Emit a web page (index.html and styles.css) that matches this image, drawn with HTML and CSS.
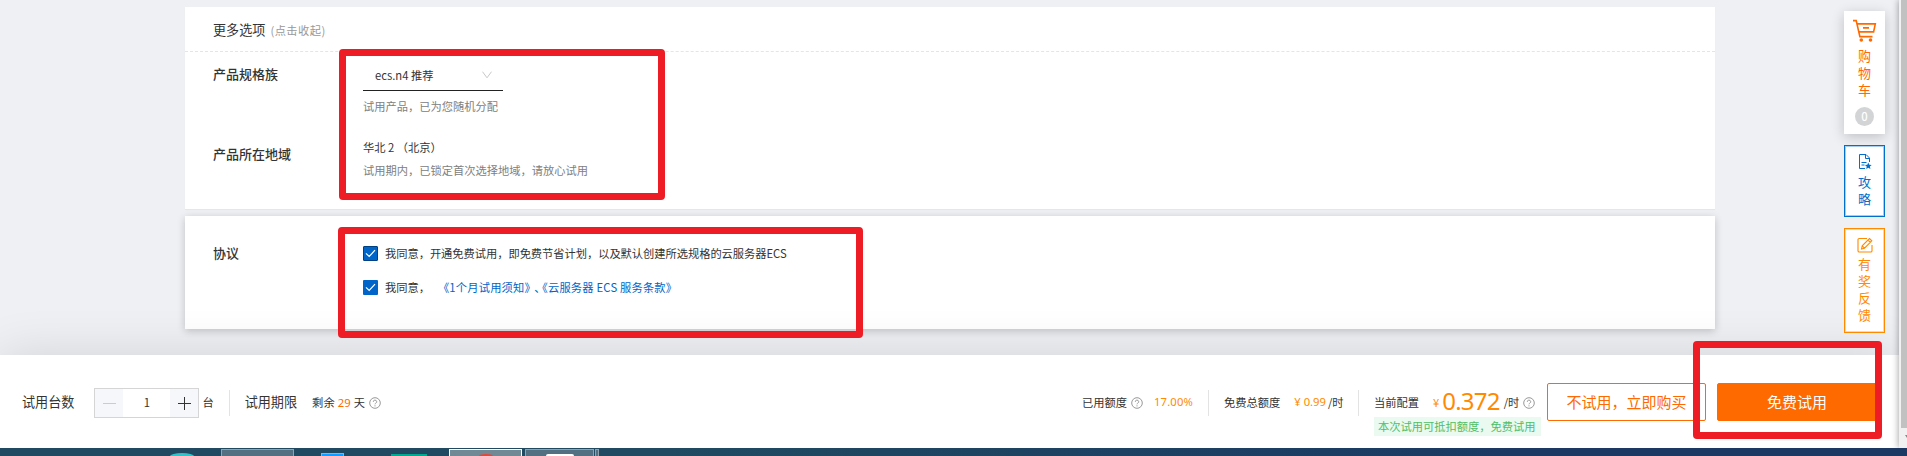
FILE: index.html
```html
<!DOCTYPE html>
<html lang="zh-CN">
<head>
<meta charset="utf-8">
<title>免费试用</title>
<link rel="stylesheet" href="styles.css">
</head>
<body>
<svg class="defs" width="0" height="0">
  <symbol id="help" viewBox="0 0 12 12"><circle cx="6" cy="6" r="5.3" fill="none" stroke="currentColor"/><path d="M4.3 4.8a1.7 1.6 0 1 1 2.4 1.4Q6 6.6 6 7.3M6 8.3v1.1" fill="none" stroke="currentColor"/></symbol>
</svg>
<div class="screen">
  <div class="window">
    <div class="page">
      <main class="content">
        <section class="card options">
          <header class="card-head"><span class="card-title">更多选项</span><span class="card-toggle">(点击收起)</span></header>
          <div class="field family">
            <div class="label">产品规格族</div>
            <div class="control">
              <div class="select"><span>ecs.n4 推荐</span><svg width="10" height="8" viewBox="0 0 10 8"><path d="M.5.7 5 6.8 9.5.7" fill="none" stroke="#c8c8c8"/></svg></div>
              <div class="hint">试用产品，已为您随机分配</div>
            </div>
          </div>
          <div class="field region">
            <div class="label">产品所在地域</div>
            <div class="control">
              <div class="value">华北 2 （北京）</div>
              <div class="hint">试用期内，已锁定首次选择地域，请放心试用</div>
            </div>
          </div>
        </section>
        <section class="card agreement">
          <div class="label">协议</div>
          <div class="checks">
            <div class="check"><span class="box focus"><svg width="11" height="9" viewBox="0 0 11 9"><path d="m1 4.3 3.2 3.2L10 1.2" fill="none" stroke="#fff" stroke-width="1.2"/></svg></span><span class="check-text">我同意，开通免费试用，即免费节省计划，以及默认创建所选规格的云服务器ECS</span></div>
            <div class="check"><span class="box"><svg width="11" height="9" viewBox="0 0 11 9"><path d="m1 4.3 3.2 3.2L10 1.2" fill="none" stroke="#fff" stroke-width="1.2"/></svg></span><span class="check-text">我同意，</span><span class="links">《1个月试用须知》<i>、</i><i>《</i>云服务器 ECS 服务条款》</span></div>
          </div>
        </section>
      </main>
      <footer class="bar">
        <div class="bar-left">
          <span class="bar-label">试用台数</span>
          <div class="stepper">
            <span class="step"><svg width="13" height="13"><path d="M0 6.5h13" stroke="#ccc"/></svg></span>
            <span class="count">1</span>
            <span class="step"><svg width="13" height="13"><path d="M0 6.5h13M6.5 0v13" stroke="#333"/></svg></span>
          </div>
          <span class="unit">台</span>
          <span class="rule"></span>
          <span class="bar-label">试用期限</span>
          <span class="remain">剩余 <b>29</b> 天</span>
          <svg class="help"><use href="#help"/></svg>
        </div>
        <div class="bar-right">
          <div class="stat used"><span>已用额度</span><svg class="help"><use href="#help"/></svg><b>17.00%</b></div>
          <div class="stat total"><span>免费总额度</span><b>¥ 0.99</b><em>/时</em></div>
          <div class="stat current">
            <div class="price"><span>当前配置</span><b class="yen">¥</b><strong>0.372</strong><em>/时</em><svg class="help"><use href="#help"/></svg></div>
            <div class="tag">本次试用可抵扣额度，免费试用</div>
          </div>
          <button class="btn outline">不试用，立即购买</button>
          <button class="btn solid">免费试用</button>
        </div>
      </footer>
    </div>
    <div class="scrollbar"><div class="thumb"></div><svg width="6" height="20"><path d="M4 7h2v3z" fill="#888"/></svg></div>
  </div>
  <div class="taskbar">
    <span class="app edge"></span><span class="slot first"></span><span class="app blue"></span><span class="app teal"></span>
    <span class="slot active"><span class="dot"></span></span><span class="slot last"><span class="pill"></span></span><span class="slot stack"></span>
  </div>
  <aside class="tools">
    <div class="tool cart">
      <svg width="24" height="24" viewBox="0 0 24 24" fill="none" stroke="#ff6a00" stroke-width="1.6"><path d="M0 1.6h3.2L6.9 17.6H19.500M4.200 4.900H22.300L20.600 12.900H6M10 8.900h6"/><circle cx="8.3" cy="21" r="1.8" fill="#ff6a00" stroke="none"/><circle cx="17.5" cy="21" r="1.8" fill="#ff6a00" stroke="none"/></svg>
      <span class="word">购物车</span><span class="badge">0</span>
    </div>
    <div class="tool guide">
      <svg width="14" height="16" viewBox="0 0 14 16" fill="none" stroke="#0070cc"><path d="M7 14.5H1.500v-14h6.500l3.500 3.500v4M7.500.5V4.500h4M3.500 8.500h5M3.500 11h3"/><path d="m10.3 8.600 1 2.200 2.400.2-1.800 1.600.5 2.300-2.100-1.200-2.100 1.200.5-2.300-1.800-1.600 2.400-.2z" fill="#0070cc" stroke="none"/></svg>
      <span class="word">攻略</span>
    </div>
    <div class="tool feedback">
      <svg width="16" height="16" viewBox="0 0 16 16" fill="none" stroke="#ff8a00" stroke-width="1.1"><path d="M10 1.5H2.200Q1 1.500 1 2.700v11Q1 15 2.200 15h11.600Q15 15 15 13.700V8"/><path d="m4.500 12 .7-3.200L12.500 1.500l2.300 2.300L7.500 11.200zM11 3l2.300 2.300M5.200 8.800l2.300 2.400"/></svg>
      <span class="word">有奖反馈</span>
    </div>
  </aside>
  <div class="mark mark-options"></div>
  <div class="mark mark-agreement"></div>
  <div class="mark mark-trial"></div>
</div>
</body>
</html>
```
FILE: styles.css
```css
* { box-sizing: border-box; }
body { margin: 0; font: 11.25px/16px "Noto Sans CJK SC", sans-serif; color: #333; }
svg { display: block; flex: none; }
b, em, i, strong { font-weight: 400; font-style: normal; }
.defs { position: absolute; }
.screen { position: relative; width: 1907px; height: 456px; overflow: hidden; display: flex; flex-direction: column; }
.window { display: flex; height: 448px; }
.page { flex: 1; display: flex; flex-direction: column; background: #eff0f4; overflow: hidden; }
.content { height: 355px; padding: 7px 184px 0 185px; }
.card { background: #fff; }
.options { height: 202px; box-shadow: 0 1px 1px rgba(0,0,0,.04); }
.card-head { height: 45px; padding: 1px 28px 0; display: flex; align-items: center; gap: 5px; border-bottom: 1px dashed #e5e5e5; }
.card-title { font-size: 13.1px; }
.card-toggle { color: #999; padding-top: 1px; letter-spacing: .45px; }
.field { display: flex; padding-left: 28px; }
.label { width: 150px; font-size: 13px; font-weight: 500; }
.family { height: 80px; padding-top: 7px; }
.family .label { padding-top: 7px; }
.select { width: 140px; height: 32px; display: flex; justify-content: space-between; align-items: center; padding: 0 11px 0 12px; border-bottom: 1px solid #222; }
.hint { color: #808080; }
.select + .hint { margin-top: 7px; }
.region { padding-top: 7px; }
.region .label { padding-top: 7px; }
.region .hint { margin-top: 7px; }
.agreement { display: flex; height: 113px; margin-top: 7px; padding: 30px 28px; box-shadow: 0 2px 8px rgba(0,0,0,.2); }
.agreement .label { margin-top: -1px; }
.checks { display: flex; flex-direction: column; gap: 19px; }
.check { display: flex; align-items: center; height: 15px; }
.check-text, .links { padding-bottom: 1px; }
.check-text { letter-spacing: -.03px; }
.box { width: 15px; height: 15px; margin-right: 7px; border-radius: 1px; background: #0064c8; display: grid; place-items: center; }
.focus { border: 1px solid #003f80; }
.links { color: #0064c8; margin-left: 8px; letter-spacing: .2px; }
.links i { font-feature-settings: "halt"; }
.links i:first-of-type { margin-left: 4px; margin-right: 2px; }
.bar { height: 93px; background: #fff; display: flex; justify-content: space-between; box-shadow: 0 0 50px rgba(0,0,0,.12); position: relative; }
.bar-left { display: flex; align-items: center; padding: 3px 0 0 22px; }
.bar-label, .unit, .remain { padding-bottom: 2px; }
.bar-label { font-size: 13.1px; }
.stepper { width: 105px; height: 30px; margin-left: 20px; border: 1px solid #d5d5d5; display: flex; }
.step { width: 28px; background: #f6f7fa; display: grid; place-items: center; }
.count { flex: 1; text-align: center; line-height: 27px; }
.unit { margin-left: 3px; }
.rule { width: 1px; height: 26px; background: #e3e3e3; margin: 0 15px; }
.remain { margin-left: 15px; white-space: pre; letter-spacing: .2px; }
.remain b, .used b, .total b { font-family: "Noto Sans", sans-serif; }
.remain b { color: #ff6a00; }
.help { width: 12px; height: 12px; margin-left: 4px; color: #999; }
.bar-right { display: flex; padding-right: 22px; align-items: flex-start; }
.stat { display: flex; align-items: center; height: 26px; margin-top: 35px; white-space: nowrap; }
.stat span, .stat b, .stat em { padding-bottom: 2px; }
.stat b, strong { color: #ff8a00; }
.used { width: 127px; border-right: 1px solid #e3e3e3; }
.used b { margin-left: 11px; letter-spacing: .15px; }
.total { width: 150px; padding-left: 15px; border-right: 1px solid #e3e3e3; }
.total b { margin-left: 14px; }
.total em { margin-left: 2px; }
.current { width: 188px; height: auto; padding-left: 15px; display: block; }
.price { display: flex; height: 25px; align-items: center; }
.price .yen { margin-left: 14px; }
.price strong { font: 24px/25px "Noto Sans", sans-serif; letter-spacing: -.8px; margin-left: 3px; padding-bottom: 4px; }
.price em { margin-left: 4px; }
.tag { width: 167px; height: 19px; margin-top: 2px; padding-left: 4px; line-height: 19px; background: #eafaf0; color: #51bd66; }
.btn { height: 38px; width: 159px; margin: 28px 0 0; padding: 0; border: 1px solid #ff6a00; border-radius: 2px; font: 15px/36px "Noto Sans CJK SC", sans-serif; }
.outline { background: #fff; color: #ff6a00; }
.solid { background: #ff6a00; color: #fff; width: 160px; margin-left: 11px; }
.scrollbar { width: 8px; background: #f1f1f1; padding-left: 2px; position: relative; box-shadow: 0 0 7px rgba(0,0,0,.4); }
.thumb { height: 428px; background: #c1c1c1; }
.taskbar { height: 8px; display: flex; align-items: flex-end; background: linear-gradient(90deg, #1f4a61, #1f4a61 35%, #1b3963 80%); overflow: hidden; position: relative; }
.app { height: 3px; }
.edge { width: 24px; margin-left: 170px; border-radius: 12px 12px 0 0 / 3px 3px 0 0; background: #33c2c8; }
.slot { height: 7px; border: 1px solid #8fa3af; border-bottom: 0; background: #537083; display: flex; justify-content: center; align-items: flex-end; }
.first { width: 73px; margin-left: 27px; }
.blue { width: 23px; margin-left: 27px; background: #159bff; border: 1px solid #3fd0ff; border-bottom: 0; }
.teal { width: 36px; height: 2px; margin-left: 47px; background: #00a98f; }
.active { width: 73px; margin-left: 22px; border-color: #fff; background: #718995; }
.dot { width: 14px; height: 2px; border-radius: 7px 7px 0 0 / 2px 2px 0 0; background: #e0483a; }
.last { width: 69px; margin-left: 3px; }
.pill { width: 28px; height: 2px; border-radius: 2px 2px 0 0; background: #fff; }
.stack { width: 4px; margin-left: 1px; }
.tools { position: absolute; left: 1844px; top: 11px; width: 41px; display: flex; flex-direction: column; gap: 11px; }
.tool { display: flex; flex-direction: column; align-items: center; background: #fff; border: 1px solid; }
.word { width: 13px; margin-top: 5px; font-size: 13px; line-height: 17px; word-break: break-all; }
.cart { height: 123px; padding-top: 8px; border: 0; color: #ff6a00; box-shadow: 0 3px 12px rgba(0,0,0,.2); }
.cart .word { margin-top: 4px; }
.badge { width: 19px; height: 19px; margin-top: 9px; border-radius: 50%; background: #d3d4d6; color: #fff; text-align: center; font-weight: 500; line-height: 18px; }
.guide { height: 72px; padding-top: 8px; color: #0070cc; box-shadow: inset 0 0 0 1px rgba(0,112,204,.35); }
.feedback { height: 105px; padding-top: 8px; color: #ff8a00; box-shadow: inset 0 0 0 1px rgba(255,138,0,.35); }
.guide .word { margin-top: 3px; }
.feedback .word { margin-top: 2px; }
.mark { position: absolute; border: 7px solid #ee1c24; border-radius: 4px; }
.mark-options { left: 339px; top: 49px; width: 326px; height: 151px; }
.mark-agreement { left: 338px; top: 227px; width: 525px; height: 111px; }
.mark-trial { left: 1693px; top: 341px; width: 189px; height: 98px; }
```
